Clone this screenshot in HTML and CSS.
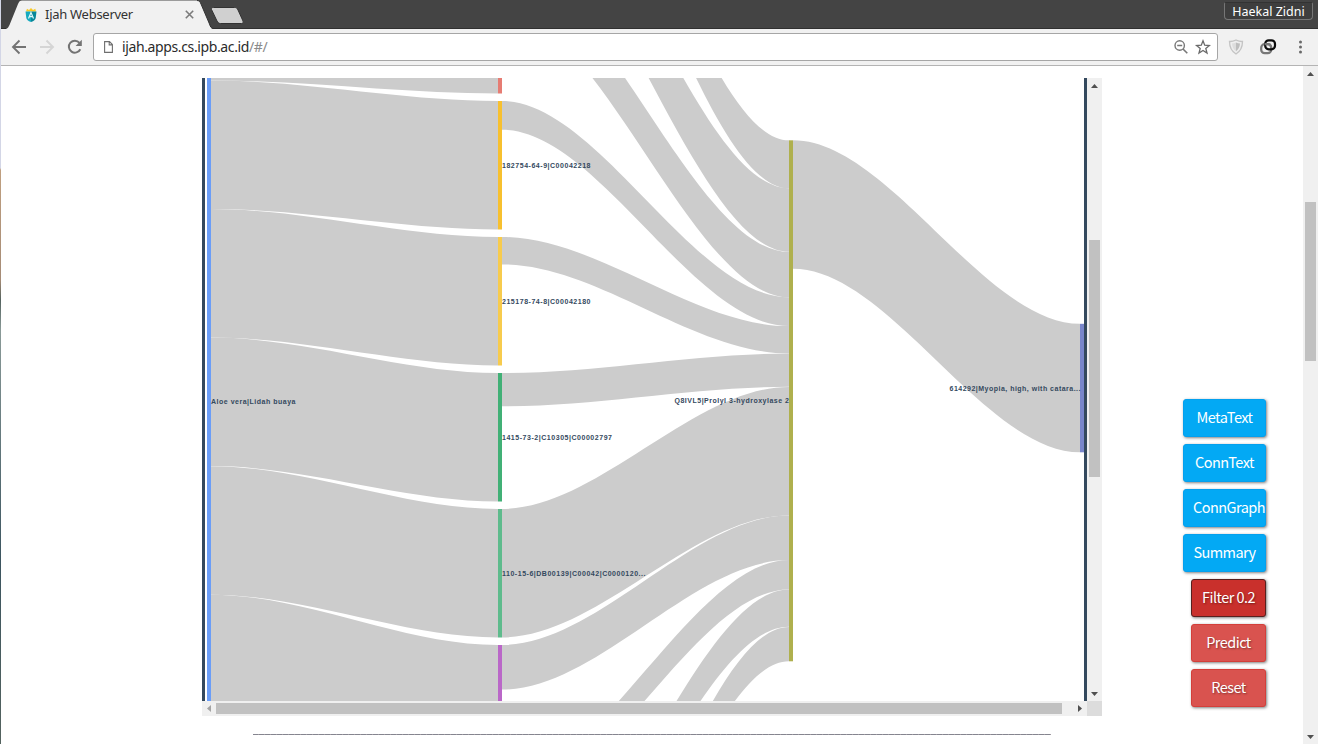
FILE: index.html
```html
<!DOCTYPE html>
<html lang="en">
<head>
<meta charset="utf-8">
<title>Ijah Webserver</title>
<link rel="stylesheet" href="styles.css">
</head>
<body>
<div class="window">
  <header class="titlebar">
    <div class="tab">
      <svg class="tab-shape" width="242" height="29" viewBox="0 0 242 29">
        <path d="M5 29 C7 28 7.500 27 8.500 25 L17 4 C18 1.500 19 .5 21 .5 H196 C198 .5 199 1.500 200 4 L208.500 24 C209.500 27 210 28 212 29Z" fill="#f1f1f1"/>
        <path d="M196 .5 C198 .5 199 1.500 200 4 L208.500 24 C209.500 27 210 28 212 28.500" fill="none" stroke="#333"/>
        <path d="M212.500 7.500 H233.500 C235.500 7.500 236 8 237 10 L242 21 C242.500 22.500 242 23.500 240.500 23.500 H219.500 C217.500 23.500 217 22.500 216 21 L210.500 9.500 C210 8 211 7.500 212.500 7.500Z" fill="#d0d0d0" stroke="#323232"/>
      </svg>
      <div class="tab-content">
        <svg class="favicon" width="12" height="14" viewBox="0 0 12 14">
          <path d="M1 3.500 L2 .8 L4 2 L6 0 L8 2 L10.300 .8 L11 3.500Z" fill="#f9c926"/>
          <path d="M.5 3.500 H6 V14 C3 13 1.500 11.500 1.300 10Z" fill="#15aabf"/>
          <path d="M6 3.500 H11.500 L10.700 10 C10.500 11.500 9 13 6 14Z" fill="#078799"/>
          <path d="M3.500 10.500 L6 4.500 L8.500 10.500 M4.500 8.700 H7.500" fill="none" stroke="#dff7fa" stroke-width="1.200"/>
        </svg>
        <span class="tab-title">Ijah Webserver</span>
        <svg class="tab-close" width="9" height="9" viewBox="0 0 9 9"><path d="M.8 .8 L8.200 8.200 M8.200 .8 L.8 8.200" stroke="#7b7b7b" stroke-width="1.600"/></svg>
      </div>
    </div>
    <div class="profile">Haekal Zidni</div>
  </header>

  <nav class="toolbar">
    <svg class="nav-icons" width="92" height="36" viewBox="0 0 92 36">
      <path d="M25 18 H12.500 M18.500 11.500 L12 18 L18.500 24.500" fill="none" stroke="#737373" stroke-width="1.900"/>
      <path d="M39 18 H51.500 M45.500 11.500 L52 18 L45.500 24.500" fill="none" stroke="#d5d5d5" stroke-width="1.900"/>
      <path d="M78.500 13.800 A6 6 0 1 0 79.300 20.200" fill="none" stroke="#737373" stroke-width="2"/>
      <path d="M80.800 10.800 V17 H74.600Z" fill="#737373"/>
    </svg>
    <div class="address">
      <svg width="9" height="12" viewBox="0 0 9 12"><path d="M.6 .6 H5.500 L8.400 3.500 V11.400 H.6Z M5.200 .8 V3.900 H8.200" fill="none" stroke="#6f6f6f" stroke-width="1.100"/></svg>
      <span class="url">ijah.apps.cs.ipb.ac.id<span class="url-path">/#/</span></span>
      <svg class="address-icons" width="37" height="16" viewBox="0 0 37 16">
        <circle cx="5.700" cy="6.500" r="4.700" fill="none" stroke="#777" stroke-width="1.400"/>
        <path d="M3.200 6.500 H8.200 M9 10 L13.300 14.300" stroke="#777" stroke-width="1.600"/>
        <path d="M29 1.800 L30.700 6.200 L35.400 6.500 L31.800 9.500 L33 14 L29 11.500 L25 14 L26.200 9.500 L22.600 6.500 L27.300 6.200Z" fill="none" stroke="#6a6a6a" stroke-width="1.300"/>
      </svg>
    </div>
    <svg class="extensions" width="100" height="36" viewBox="0 0 100 36">
      <path d="M18 11 Q14.500 12.700 11.500 12.500 Q11.500 21 18 25 Q24.500 21 24.500 12.500 Q21.500 12.700 18 11Z" fill="#eee" stroke="#c4c4c4" stroke-width="1.300"/>
      <path d="M18 13.400 Q16 14.500 14 14.500 Q14.300 19.500 18 22.300Z" fill="#ddd"/>
      <path d="M18 13.400 Q20 14.500 22 14.500 Q21.700 19.500 18 22.300Z" fill="#bdbdbd"/>
      <rect x="43.200" y="15.200" width="10" height="9" rx="3.500" fill="none" stroke="#777" stroke-width="2.200"/>
      <rect x="47.200" y="11.300" width="9.800" height="9" rx="3.500" fill="none" stroke="#0b0b0b" stroke-width="2.200"/>
      <path d="M46.500 15.200 H50 Q53.200 15.200 53.200 18.500" fill="none" stroke="#777" stroke-width="2.200"/>
      <circle cx="82.500" cy="13" r="1.500" fill="#696969"/><circle cx="82.500" cy="18" r="1.500" fill="#696969"/><circle cx="82.500" cy="23" r="1.500" fill="#696969"/>
    </svg>
  </nav>

  <main class="page">
    <section class="content">
      <div class="graph">
        <div class="graph-row">
          <svg class="sankey" width="879" height="623" viewBox="205 78 879 623">
            <g id="links" fill="#ccc"></g>
            <g id="nodes"></g>
            <g class="labels">
              <text x="211" y="404" textLength="84.500">Aloe vera|Lidah buaya</text>
              <text x="502" y="168" textLength="88.500">182754-64-9|C00042218</text>
              <text x="502" y="304" textLength="88.500">215178-74-8|C00042180</text>
              <text x="502" y="440" textLength="110">1415-73-2|C10305|C00002797</text>
              <text x="502" y="576" textLength="143.500">110-15-6|DB00139|C00042|C0000120...</text>
              <text x="674.500" y="403" textLength="114.500">Q8IVL5|Prolyl 3-hydroxylase 2</text>
              <text x="949.500" y="391" textLength="131">614292|Myopia, high, with catara...</text>
            </g>
          </svg>
          <div class="scroll-v graph-v">
            <svg class="arrow" width="7" height="4"><path d="M0 4 L3.500 0 L7 4Z" fill="#505050"/></svg>
            <div class="thumb"></div>
            <svg class="arrow" width="7" height="4"><path d="M0 0 L3.500 4 L7 0Z" fill="#505050"/></svg>
          </div>
        </div>
        <div class="graph-bottom">
          <div class="scroll-h">
            <svg width="4" height="7"><path d="M4 0 L0 3.500 L4 7Z" fill="#a3a3a3"/></svg>
            <div class="thumb"></div>
            <svg width="4" height="7"><path d="M0 0 L4 3.500 L0 7Z" fill="#505050"/></svg>
          </div>
          <div class="corner"></div>
        </div>
      </div>
      <div class="rule"></div>
    </section>
    <aside class="actions">
      <button class="btn blue">MetaText</button>
      <button class="btn blue">ConnText</button>
      <button class="btn blue">ConnGraph</button>
      <button class="btn blue">Summary</button>
      <button class="btn red active">Filter 0.2</button>
      <button class="btn red">Predict</button>
      <button class="btn red">Reset</button>
    </aside>
    <div class="scroll-v page-v">
      <svg class="arrow" width="7" height="4"><path d="M0 4 L3.500 0 L7 4Z" fill="#505050"/></svg>
      <div class="thumb"></div>
      <svg class="arrow" width="7" height="4"><path d="M0 0 L3.500 4 L7 0Z" fill="#505050"/></svg>
    </div>
  </main>
</div>
<script src="sankey.js"></script>
</body>
</html>
```
FILE: styles.css
```css
* { box-sizing: border-box; }
body { margin: 0; background: #fff; overflow: hidden; }
svg { display: block; flex: none; }
.window {
  width: 1318px;
  height: 744px;
  display: flex;
  flex-direction: column;
  padding-left: 1px;
  background: linear-gradient(#d3d6e6 0 168px, #c0a080 170px, #a58b76 280px, #54635f 300px, #8a9a98 330px, #3c5560 560px, #54635f 744px);
}
.titlebar {
  height: 29px;
  flex: none;
  display: flex;
  justify-content: space-between;
  background: linear-gradient(#444 28px, #303030 28px);
}
.tab { display: grid; width: 242px; height: 29px; }
.tab > * { grid-area: 1 / 1; }
.tab-content { display: flex; align-items: center; height: 29px; padding-left: 24px; }
.tab-title {
  width: 140px;
  margin: 0 0 0 8px;
  font: 13px/27px "Noto Sans", sans-serif;
  letter-spacing: -0.28px;
  color: #333;
}
.profile {
  width: 89px;
  height: 18px;
  margin: 2px 5px 0 0;
  border: 1px solid #777;
  border-top-color: #333;
  border-radius: 2px 2px 4px 4px;
  background: #3e3e3e;
  color: #fff;
  font: 12.5px/17px "Noto Sans", sans-serif;
  text-align: center;
  white-space: nowrap;
}
.toolbar {
  height: 37px;
  flex: none;
  display: flex;
  background: #f1f1f1;
  border-bottom: 1px solid #b4b4b4;
}
.address {
  width: 1125px;
  height: 28px;
  margin-top: 4px;
  display: flex;
  align-items: center;
  padding: 0 6px 0 10px;
  border: 1px solid #a6a6a6;
  border-radius: 3px;
  background: #fff;
}
.url {
  margin-left: 9px;
  font: 14px/26px "Noto Sans", sans-serif;
  letter-spacing: -0.38px;
  color: #2b2b2b;
}
.url-path { color: #8b8b8b; }
.address-icons { margin-left: auto; }
.page { flex: 1; min-height: 0; display: flex; background: #fff; }
.content { width: 1182px; padding: 12px 0 0 201px; }
.graph { width: 900px; }
.graph-row { display: flex; height: 623px; }
.sankey { box-sizing: content-box; border: solid #34495e; border-width: 0 3px; }
.labels {
  font: bold 7px "Liberation Sans", Arial, sans-serif;
  fill: #34495e;
}
.scroll-v {
  width: 15px;
  display: flex;
  flex-direction: column;
  align-items: center;
  background: #f0f0f0;
}
.thumb { background: #c1c1c1; }
.scroll-v .thumb { width: 11px; margin-bottom: auto; }
.graph-v { padding: 6px 0 5px; }
.graph-v .thumb { height: 237px; margin-top: 152px; }
.page-v { padding: 6px 0 5px; }
.page-v .thumb { height: 159px; margin-top: 126px; }
.graph-bottom { display: flex; height: 15px; }
.scroll-h {
  width: 885px;
  display: flex;
  align-items: center;
  padding: 0 5px;
  background: #f0f0f0;
}
.scroll-h .thumb { width: 846px; height: 11px; margin: 0 auto 0 5px; }
.corner { width: 15px; background: #dcdcdc; }
.rule {
  width: 798px;
  height: 1px;
  margin: 18px 0 0 51px;
  background: repeating-linear-gradient(90deg, #85858f 0 5px, #a09ca3 5px 6px);
}
.actions {
  width: 120px;
  padding: 333px 37px 0 0;
  display: flex;
  flex-direction: column;
  align-items: flex-end;
  gap: 7px;
}
.btn {
  display: flex;
  justify-content: center;
  align-items: center;
  height: 38px;
  padding: 0 9px 2px;
  border: 1px solid #04a0ee;
  border-radius: 3px;
  box-shadow: 1px 1px 3px rgba(0, 0, 0, 0.5);
  color: #fff;
  font: 14.5px/20px "Noto Sans CJK SC", "Noto Sans", sans-serif;
  letter-spacing: -0.55px;
  white-space: nowrap;
}
.blue { width: 83px; background: #03a9f4; justify-content: safe center; }
.red { width: 75px; background: #d9534f; border-color: #d43f3a; text-shadow: 1px 1px 2px rgba(0, 0, 0, 0.4); }
.active { background: #c9302c; border-color: #58201e; }
```
FILE: sankey.js
```js
const NS = 'http://www.w3.org/2000/svg';

// Each link: left x, left top y, right x, right top y, thickness
const links = [
  [211, -48, 498, -35, 128.5],
  [211, 80.5, 498, 101, 128.5],
  [211, 209.1, 498, 237, 128.5],
  [211, 337.6, 498, 373, 128.5],
  [211, 466.2, 498, 509, 128.5],
  [211, 594.7, 498, 645, 128.5],
  [502, -307, 789, 140.3, 48],
  [502, -171, 789, 188.3, 63.5],
  [502, -35, 789, 251.8, 45.5],
  [502, 101, 789, 297.3, 28.8],
  [502, 237, 789, 326.1, 27.4],
  [502, 373, 789, 353.5, 33.3],
  [502, 509, 789, 387, 128.5],
  [502, 645, 789, 515.5, 44.6],
  [502, 781, 789, 560.1, 29.3],
  [502, 917, 789, 589.5, 37.3],
  [502, 1053, 789, 626.9, 34.4],
  [793, 140.3, 1080, 323.8, 128.5]
];

// Each node: x, y, height, colour
const nodes = [
  [207, 70, 640, '#6a9df8'],
  [498, -35, 128.5, '#e67c73'],
  [498, 101, 128.5, '#f7c02f'],
  [498, 237, 128.5, '#f7cb4d'],
  [498, 373, 128.5, '#41b076'],
  [498, 509, 128.5, '#5ebb8c'],
  [498, 645, 128.5, '#ba67c8'],
  [789, 140.3, 521, '#afb04e'],
  [1080, 323.8, 128.5, '#7986cb']
];

function add(parent, tag, attrs) {
  const el = document.createElementNS(NS, tag);
  for (const key in attrs) el.setAttribute(key, attrs[key]);
  document.getElementById(parent).appendChild(el);
}

for (const [x0, y0, x1, y1, h] of links) {
  const a = x0 + (x1 - x0) / 3;
  const b = x1 - (x1 - x0) / 3;
  add('links', 'path', {
    d: `M${x0} ${y0} C${a} ${y0} ${b} ${y1} ${x1} ${y1} V${y1 + h} C${b} ${y1 + h} ${a} ${y0 + h} ${x0} ${y0 + h}Z`
  });
}
for (const [x, y, h, fill] of nodes) {
  add('nodes', 'rect', { x, y, width: 4, height: h, fill });
}
```
